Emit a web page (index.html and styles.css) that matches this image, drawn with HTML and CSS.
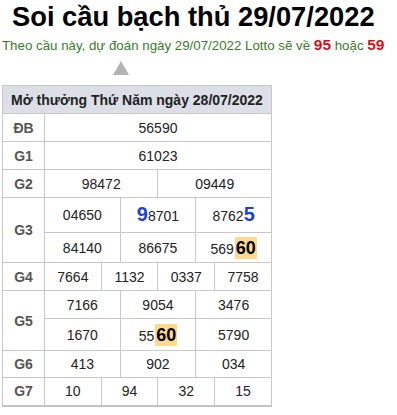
FILE: index.html
```html
<!DOCTYPE html>
<html lang="vi">
<head>
<meta charset="utf-8">
<title>Soi cầu bạch thủ 29/07/2022</title>
<link rel="stylesheet" href="styles.css">
</head>
<body>
<div class="page">
  <h1 class="title">Soi cầu bạch thủ 29/07/2022</h1>
  <p class="sub">Theo cầu này, dự đoán ngày 29/07/2022 Lotto sẽ về <b class="red">95</b> hoặc <b class="red">59</b></p>
  <div class="arrow"></div>
  <table class="kq">
    <colgroup>
      <col class="c-label">
      <col><col><col><col><col><col><col><col><col><col><col><col>
    </colgroup>
    <tr class="r-head"><th colspan="13" class="head">Mở thưởng Thứ Năm ngày 28/07/2022</th></tr>
    <tr class="r28"><td class="lbl">ĐB</td><td colspan="12">56590</td></tr>
    <tr class="r28"><td class="lbl">G1</td><td colspan="12">61023</td></tr>
    <tr class="r28"><td class="lbl">G2</td><td colspan="6">98472</td><td colspan="6">09449</td></tr>
    <tr class="r35"><td class="lbl" rowspan="2">G3</td><td colspan="4">04650</td><td colspan="4"><span class="big">9</span>8701</td><td colspan="4">8762<span class="big">5</span></td></tr>
    <tr class="r30"><td colspan="4">84140</td><td colspan="4">86675</td><td colspan="4">569<span class="hl">60</span></td></tr>
    <tr class="r28"><td class="lbl">G4</td><td colspan="3">7664</td><td colspan="3">1132</td><td colspan="3">0337</td><td colspan="3">7758</td></tr>
    <tr class="r28"><td class="lbl" rowspan="2">G5</td><td colspan="4">7166</td><td colspan="4">9054</td><td colspan="4">3476</td></tr>
    <tr class="r32"><td colspan="4">1670</td><td colspan="4">55<span class="hl">60</span></td><td colspan="4">5790</td></tr>
    <tr class="r27"><td class="lbl">G6</td><td colspan="4">413</td><td colspan="4">902</td><td colspan="4">034</td></tr>
    <tr class="r28"><td class="lbl">G7</td><td colspan="3">10</td><td colspan="3">94</td><td colspan="3">32</td><td colspan="3">15</td></tr>
  </table>
</div>
</body>
</html>
```
FILE: styles.css
```css
html, body {
  margin: 0;
  padding: 0;
  background: #fff;
}
body {
  font-family: "Liberation Sans", Arial, sans-serif;
  color: #222;
}
.page {
  padding: 0 2px;
}
.title {
  margin: 0;
  padding-left: 10px;
  font-size: 27.3px;
  line-height: 34px;
  font-weight: bold;
  color: #000;
}
.sub {
  margin: 2px 0 0 0;
  font-size: 13.3px;
  line-height: 18px;
  white-space: nowrap;
  color: #3a7a2a;
}
.red {
  color: #d0121b;
  font-size: 15.5px;
}
.arrow {
  width: 0;
  height: 0;
  margin: 6px 0 0 111px;
  border-left: 8px solid transparent;
  border-right: 8px solid transparent;
  border-bottom: 14px solid #b3b3b3;
}
.kq {
  margin-top: 10px;
  width: 270px;
  table-layout: fixed;
  border-collapse: collapse;
  border-bottom: 2px solid #c4c4c4;
  font-size: 14px;
}
.c-label {
  width: 42px;
}
.kq th, .kq td {
  border: 1px solid #c8c8c8;
  padding: 0;
  text-align: center;
  vertical-align: middle;
  line-height: 18px;
}
.head {
  background: #dcdfe6;
  font-weight: bold;
  color: #222;
}
.lbl {
  font-weight: bold;
  color: #555;
}
.r-head, .r28 { height: 28px; }
.r35 { height: 35px; }
.r30 { height: 30px; }
.r32 { height: 32px; }
.r27 { height: 27px; }
.big {
  font-size: 20px;
  font-weight: bold;
  color: #1f43cf;
}
.hl {
  display: inline-block;
  margin-left: 1px;
  padding: 0 1px;
  background: #ffd98c;
  font-size: 18px;
  font-weight: bold;
  line-height: 22px;
  color: #000;
}
```
